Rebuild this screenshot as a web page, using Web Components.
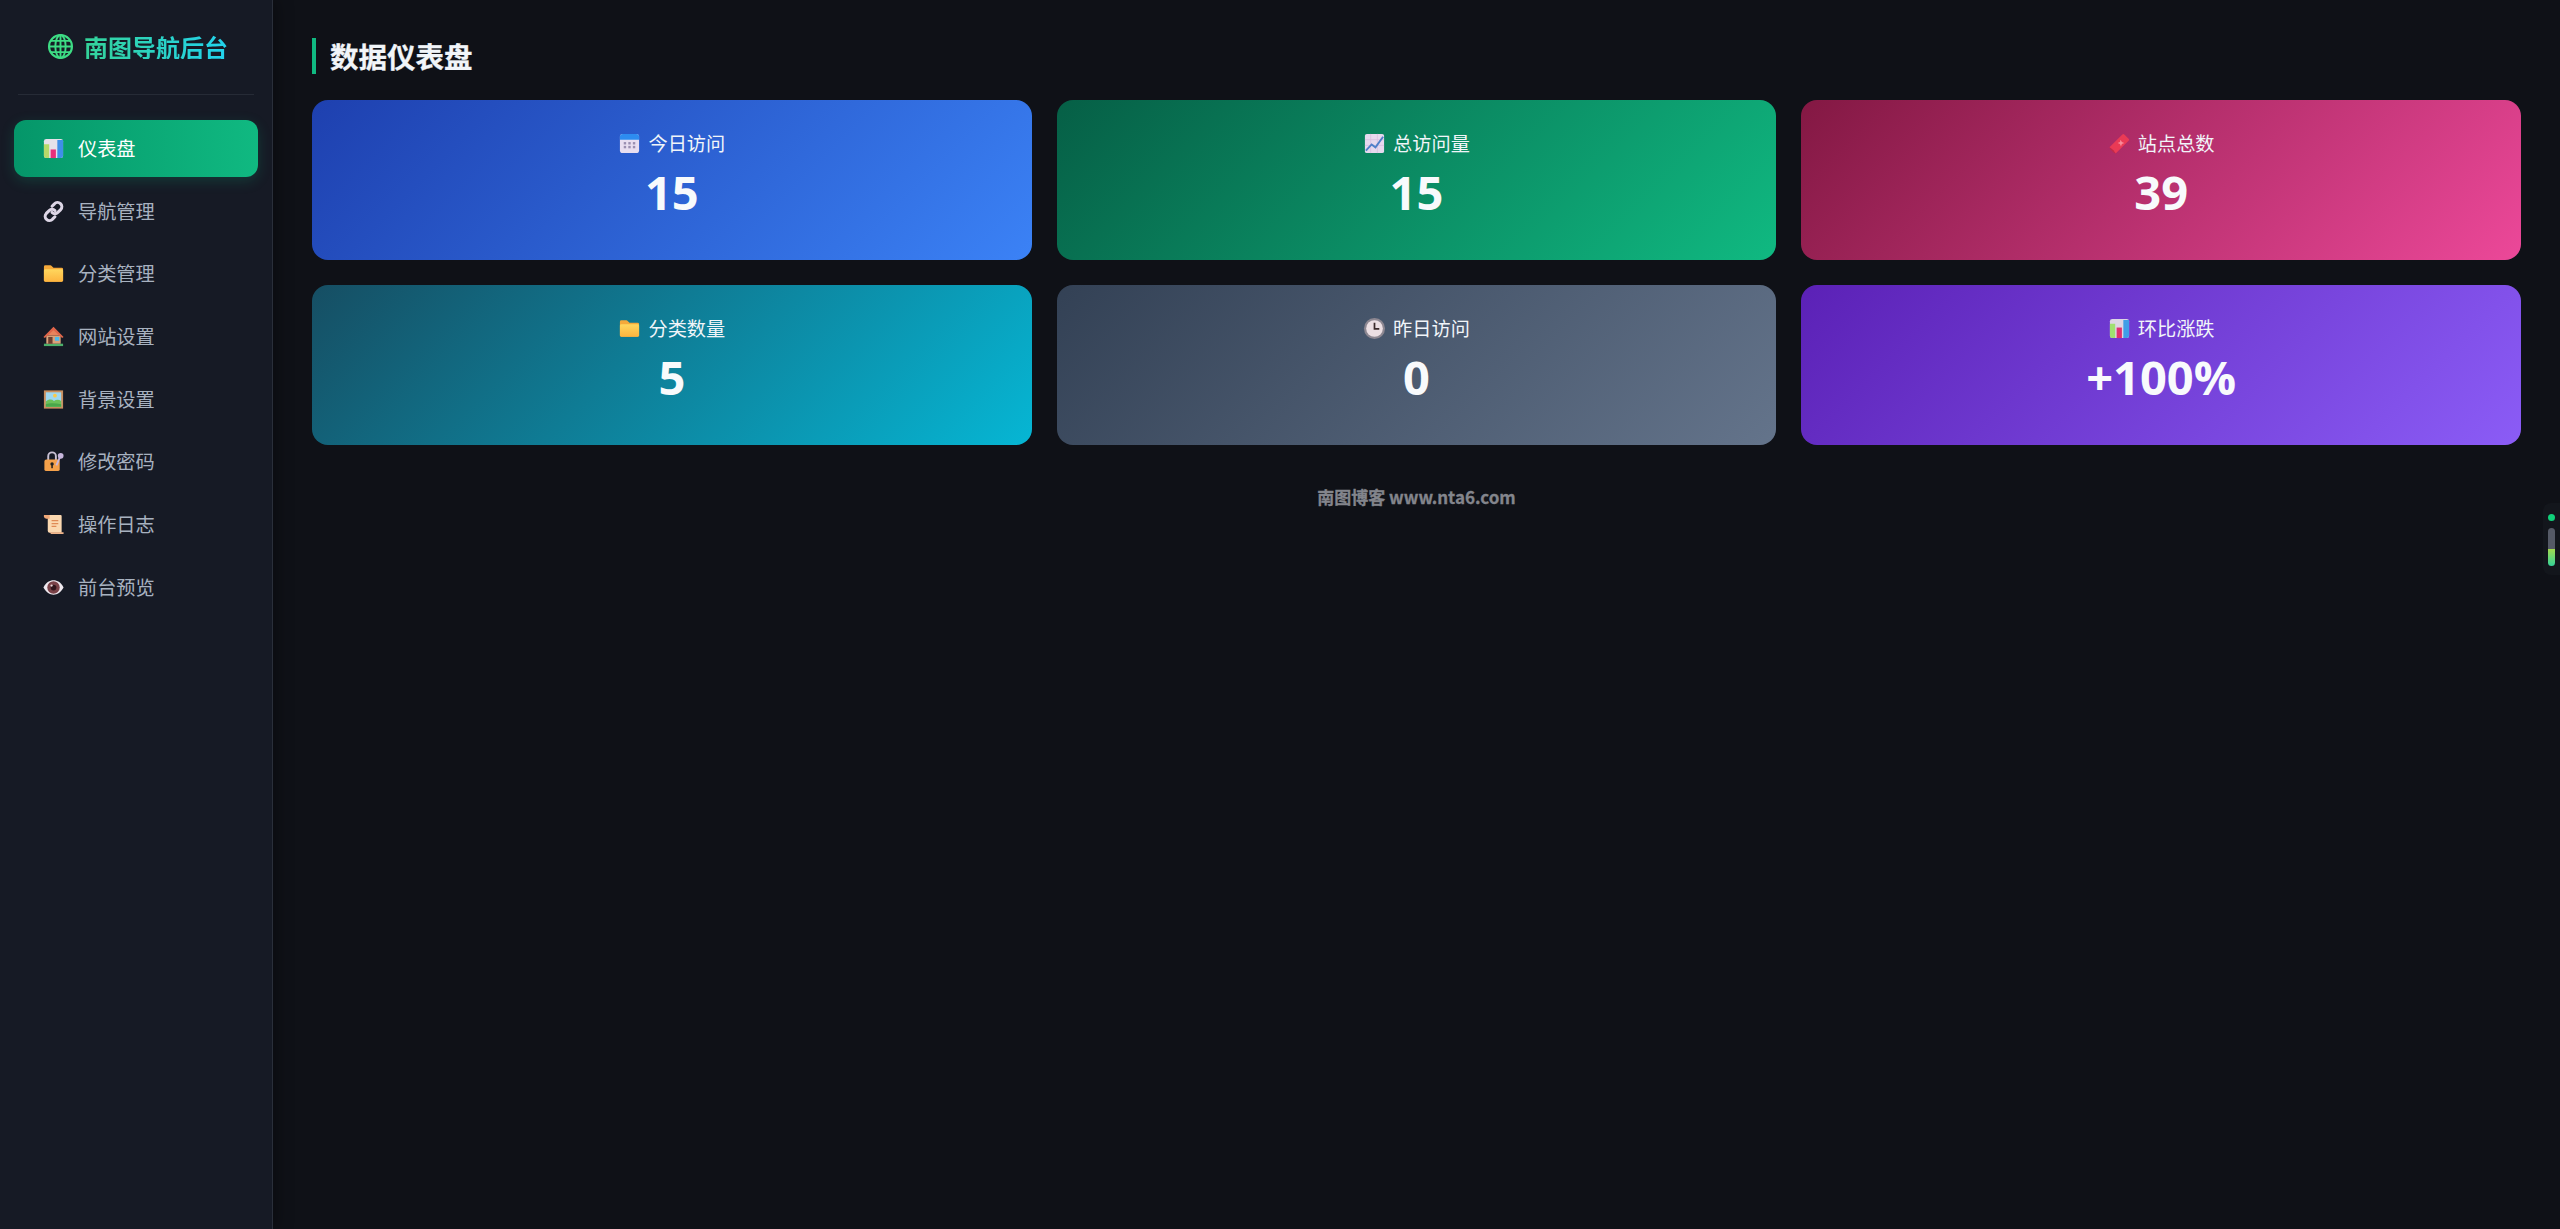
<!DOCTYPE html>
<html lang="zh"><head><meta charset="utf-8"><title>南图导航后台</title>
<style>
html,body{margin:0;height:100%;background:#0f1117}
body{font-family:"Noto Sans CJK SC","Noto Sans",sans-serif}
</style></head><body>
<template id="t-app"><style>
:host{display:flex;min-height:1229px;background:#0f1117;position:relative;overflow:hidden}
main{flex:1;min-width:0;padding:38px 39px 0 38px;display:flex;flex-direction:column}
.grid{display:grid;grid-template-columns:repeat(3,1fr);gap:25px;margin-top:26px}
::slotted([slot=side]){position:relative;z-index:1}
</style><slot name="side"></slot><main><slot name="title"></slot><div class="grid"><slot></slot></div><slot name="foot"></slot></main><slot name="dock"></slot></template>

<template id="t-side"><style>
:host{display:flex;flex-direction:column;box-sizing:border-box;width:273px;margin-right:1px;flex:none;background:#161a25;border-right:1px solid #2a2f3a;padding:0 14px;box-shadow:3px 0 16px rgba(0,0,0,.35)}
.brand{display:flex;align-items:center;justify-content:center;gap:10px;height:95px;margin:0 4px 25px;border-bottom:1px solid #262b36;box-sizing:border-box;padding:0 0 1px 3px}
.brand b{font-size:24px;font-weight:700;line-height:1;background:linear-gradient(90deg,#34d399,#22d3ee);-webkit-background-clip:text;background-clip:text;color:transparent}
nav{display:flex;flex-direction:column;gap:5.7px}
</style><div class="brand"><ui-icon name="globe" size="27"></ui-icon><b>南图导航后台</b></div><nav><slot></slot></nav></template>

<template id="t-nav"><style>
:host{display:flex;align-items:center;gap:13px;height:57px;box-sizing:border-box;padding-left:28px;border-radius:12px;color:#a8b2c0;font-size:19.2px;line-height:1}
:host([active]){background:linear-gradient(90deg,#059669,#10b981);color:#fff;box-shadow:0 4px 14px rgba(16,185,129,.2)}
</style><slot name="icon"></slot><slot></slot></template>

<template id="t-title"><style>
:host{display:flex;align-items:center;height:36px;border-left:4px solid #10b981;padding-left:14px;color:#f1f5f9;font-size:28.5px;font-weight:700;line-height:1;-webkit-text-stroke:.3px #f1f5f9}
</style><slot></slot></template>

<template id="t-card"><style>
:host{display:flex;flex-direction:column;align-items:center;box-sizing:border-box;height:160px;padding-top:29px;border-radius:16px;color:#fff;background:linear-gradient(135deg,var(--a),var(--b))}
.l{display:flex;align-items:center;gap:7px;font-size:19.2px;line-height:28px;color:#f1f5f9}
.v{font-family:"Open Sans",sans-serif;font-weight:700;font-size:47px;line-height:62px;margin-top:4px;color:#f8fafc}
</style><div class="l"><slot name="icon"></slot><span><slot name="label"></slot></span></div><div class="v"><slot></slot></div></template>

<template id="t-foot"><style>
:host{display:block;text-align:center;margin-top:40px;color:#83858c;font-size:17px;font-weight:700;line-height:24px;-webkit-text-stroke:.3px #83858c}
</style><slot></slot></template>

<template id="t-dock"><style>
:host{position:absolute;right:0;top:503px;width:17px;height:72px;background:#13161c;border-radius:8px 0 0 8px;display:flex;flex-direction:column;align-items:center;padding-top:11px;box-sizing:border-box}
i{width:7px;height:7px;border-radius:50%;background:#10d07a;display:block}
u{display:block;width:7px;height:38px;margin-top:7px;border-radius:4px;background:linear-gradient(#555a66 0 55%,#a3d94f 55%,#34d399 100%)}
</style><i></i><u></u></template>

<script>
const ICONS={
globe:`<circle cx="12" cy="12" r="10.2" fill="none" stroke="#3ddc84" stroke-width="1.9"/><ellipse cx="12" cy="12" rx="4.6" ry="10.2" fill="none" stroke="#3ddc84" stroke-width="1.7"/><path d="M12 2v20M2 12h20M3.400 7h17.200M3.400 17h17.200" fill="none" stroke="#3ddc84" stroke-width="1.7"/>`,
chart:`<rect x="2" y="2" width="20" height="20" rx="2.500" fill="#e6e1ea"/><path d="M2 7.500h5.500V22H4.500A2.500 2.500 0 0 1 2 19.500z" fill="#b6d96a"/><rect x="9" y="13" width="5.500" height="9" fill="#e8307c"/><path d="M16 3h6v16.500a2.500 2.500 0 0 1-2.500 2.500H16z" fill="#3f8fe8"/>`,
link:`<g fill="none" stroke="#ddd6e6" stroke-width="3.2" stroke-linecap="round"><path d="M10.500 6.500 13 4a4.200 4.200 0 0 1 6.500 6l-3 3a4.200 4.200 0 0 1-6 0"/><path d="M13.500 17.500 11 20a4.200 4.200 0 0 1-6.500-6l3-3a4.200 4.200 0 0 1 6 0"/></g>`,
folder:`<defs><linearGradient id="f" x1="0" y1="0" x2="0" y2="1"><stop offset="0" stop-color="#ffd75e"/><stop offset="1" stop-color="#fdb43f"/></linearGradient></defs><path d="M2 5A1.500 1.500 0 0 1 3.500 3.500h5.200c.6 0 1 .3 1.400.7L12 6h8.500A1.500 1.500 0 0 1 22 7.500V19a1.500 1.500 0 0 1-1.500 1.500h-17A1.500 1.500 0 0 1 2 19z" fill="#f5a93a"/><path d="M2 9A1.500 1.500 0 0 1 3.500 7.500h17A1.500 1.500 0 0 1 22 9V19a1.500 1.500 0 0 1-1.500 1.500h-17A1.500 1.500 0 0 1 2 19z" fill="url(#f)"/>`,
house:`<rect x="2" y="19.500" width="20" height="2.500" fill="#4caf6a"/><path d="M4.500 11h15v8.500h-15z" fill="#d9a27a"/><path d="M12 3.500 4.500 11h15z" fill="#e8835c"/><path d="M12 1.800 1.500 12.500l1.500 1L12 5.500l9 8 1.500-1z" fill="#e0654a"/><rect x="6.500" y="12.500" width="4.500" height="7" fill="#6b3d2e"/><rect x="13.500" y="12.500" width="4.500" height="4" fill="#4fb8e8"/>`,
image:`<rect x="2" y="2.500" width="20" height="19" fill="#c98f5f"/><rect x="4" y="4.500" width="16" height="15" fill="#9fd8f0"/><circle cx="13.500" cy="8" r="2" fill="#fbc947"/><path d="M4 14c3-2.500 6-2.500 8.500-.5 2.500-1.500 5-1.500 7.500 0v6H4z" fill="#6cc25a"/><path d="M4 17c4-1.500 10-1.500 16 0v2.500H4z" fill="#4aa84a"/>`,
lock:`<path d="M6.500 11V6.500a4 4 0 0 1 8 0V11" fill="none" stroke="#c9c1d4" stroke-width="2"/><rect x="2.500" y="10" width="16" height="12" rx="2" fill="#f5a14a"/><circle cx="19.500" cy="6" r="3" fill="#c7b6dc"/><path d="M18.500 8l-3.500 8" stroke="#c7b6dc" stroke-width="2"/><circle cx="10.500" cy="14.500" r="1.800" fill="#222"/><rect x="9.700" y="14.500" width="1.600" height="4.500" fill="#222"/>`,
scroll:`<path d="M6 2h13.500a1 1 0 0 1 1 1v17.500H8a2 2 0 0 1-2-2z" fill="#fbd8b0"/><path d="M2 2h6v4H4.500A2.500 2.500 0 0 1 2 3.500z" fill="#f0a878"/><path d="M8 20h14.500v2H9.500z" fill="#f0b48a"/><path d="M10 8h7M10 11h7M10 14h5" stroke="#e08a55" stroke-width="1.300"/>`,
eye:`<path d="M1.500 12C4.500 6.500 8 4.500 12 4.500s7.500 2 10.500 7.500C19.500 17.500 16 19.500 12 19.500S4.500 17.500 1.500 12z" fill="#eee8ee"/><circle cx="12" cy="12" r="6.500" fill="#7a4248"/><circle cx="12" cy="12" r="3" fill="#31161c"/><circle cx="10" cy="10" r="1.200" fill="#e9d6d9"/>`,
cal:`<rect x="2" y="2" width="20" height="20" rx="3" fill="#e8def0"/><path d="M2 8V5a3 3 0 0 1 3-3h14a3 3 0 0 1 3 3v3z" fill="#2d8cf0"/><g fill="#9a8fb0"><rect x="6" y="10.500" width="2.500" height="2.500"/><rect x="10.750" y="10.500" width="2.500" height="2.500"/><rect x="15.500" y="10.500" width="2.500" height="2.500"/><rect x="6" y="14.500" width="2.500" height="2.500"/><rect x="10.750" y="14.500" width="2.500" height="2.500"/><rect x="15.500" y="14.500" width="2.500" height="2.500"/></g>`,
trend:`<rect x="2" y="2" width="20" height="20" rx="2" fill="#e6d9ee"/><path d="M2 8h20M2 14h20M8 2v20M15 2v20" stroke="#d6bfe0" stroke-width=".8"/><path d="M3 19.500 9 13l4 3 8-11" fill="none" stroke="#4f7fc9" stroke-width="2"/>`,
pin:`<path d="M1.500 16 15 2.500c.7-.7 1.500-.7 2 0l4.500 4.500c.6.6.6 1.400 0 2L8 22.500 5.500 19z" fill="#ea3a55"/><path d="M13 8l1.500 2.500 2.500 1-2.500 1-1 2.500-1-2.500-2.500-1 2.500-1z" fill="#f98a9a"/><path d="M1.500 16 5.500 19 8 22.500 6 21.500 2.500 18z" fill="#c42a44"/>`,
clock:`<circle cx="12" cy="12" r="11" fill="#8d8791"/><circle cx="12" cy="12" r="8.700" fill="#ecdfe3"/><path d="M12 6v6.500h5" fill="none" stroke="#3a2a2a" stroke-width="1.800"/>`,
chart2:`<rect x="2" y="2" width="20" height="20" rx="2.500" fill="#dcd6e4"/><path d="M2 7h5.500v15H4.500A2.500 2.500 0 0 1 2 19.500z" fill="#9fe070"/><rect x="9" y="11" width="5.500" height="11" fill="#e0306e"/><path d="M16 3h6v16.500a2.500 2.500 0 0 1-2.500 2.500H16z" fill="#3f9ee8"/>`
};
function reg(tag,tid){customElements.define(tag,class extends HTMLElement{constructor(){super();const s=this.attachShadow({mode:"open"});s.appendChild(document.getElementById(tid).content.cloneNode(true));}})}
customElements.define("ui-icon",class extends HTMLElement{
 connectedCallback(){const n=this.getAttribute("name"),z=this.getAttribute("size")||23;
  const s=this.shadowRoot||this.attachShadow({mode:"open"});
  s.innerHTML=`<style>:host{display:inline-flex;flex:none;width:${z}px;height:${z}px}svg{display:block;width:100%;height:100%}</style><svg viewBox="0 0 24 24" aria-hidden="true">${ICONS[n]||""}</svg>`;}
});
reg("admin-app","t-app");reg("side-bar","t-side");reg("nav-item","t-nav");reg("page-title","t-title");reg("stat-card","t-card");reg("page-foot","t-foot");reg("scroll-dock","t-dock");
</script>

<admin-app>
<side-bar slot="side">
<nav-item active><ui-icon slot="icon" name="chart"></ui-icon>仪表盘</nav-item>
<nav-item><ui-icon slot="icon" name="link"></ui-icon>导航管理</nav-item>
<nav-item><ui-icon slot="icon" name="folder"></ui-icon>分类管理</nav-item>
<nav-item><ui-icon slot="icon" name="house"></ui-icon>网站设置</nav-item>
<nav-item><ui-icon slot="icon" name="image"></ui-icon>背景设置</nav-item>
<nav-item><ui-icon slot="icon" name="lock"></ui-icon>修改密码</nav-item>
<nav-item><ui-icon slot="icon" name="scroll"></ui-icon>操作日志</nav-item>
<nav-item><ui-icon slot="icon" name="eye"></ui-icon>前台预览</nav-item>
</side-bar>
<page-title slot="title">数据仪表盘</page-title>
<stat-card style="--a:#1e40af;--b:#3b82f6"><ui-icon slot="icon" name="cal"></ui-icon><span slot="label">今日访问</span>15</stat-card>
<stat-card style="--a:#065f46;--b:#10b981"><ui-icon slot="icon" name="trend"></ui-icon><span slot="label">总访问量</span>15</stat-card>
<stat-card style="--a:#831843;--b:#ec4899"><ui-icon slot="icon" name="pin"></ui-icon><span slot="label">站点总数</span>39</stat-card>
<stat-card style="--a:#164e63;--b:#06b6d4"><ui-icon slot="icon" name="folder"></ui-icon><span slot="label">分类数量</span>5</stat-card>
<stat-card style="--a:#334155;--b:#64748b"><ui-icon slot="icon" name="clock"></ui-icon><span slot="label">昨日访问</span>0</stat-card>
<stat-card style="--a:#5b21b6;--b:#8b5cf6"><ui-icon slot="icon" name="chart2"></ui-icon><span slot="label">环比涨跌</span>+100%</stat-card>
<page-foot slot="foot">南图博客 www.nta6.com</page-foot>
<scroll-dock slot="dock"></scroll-dock>
</admin-app>
</body></html>
